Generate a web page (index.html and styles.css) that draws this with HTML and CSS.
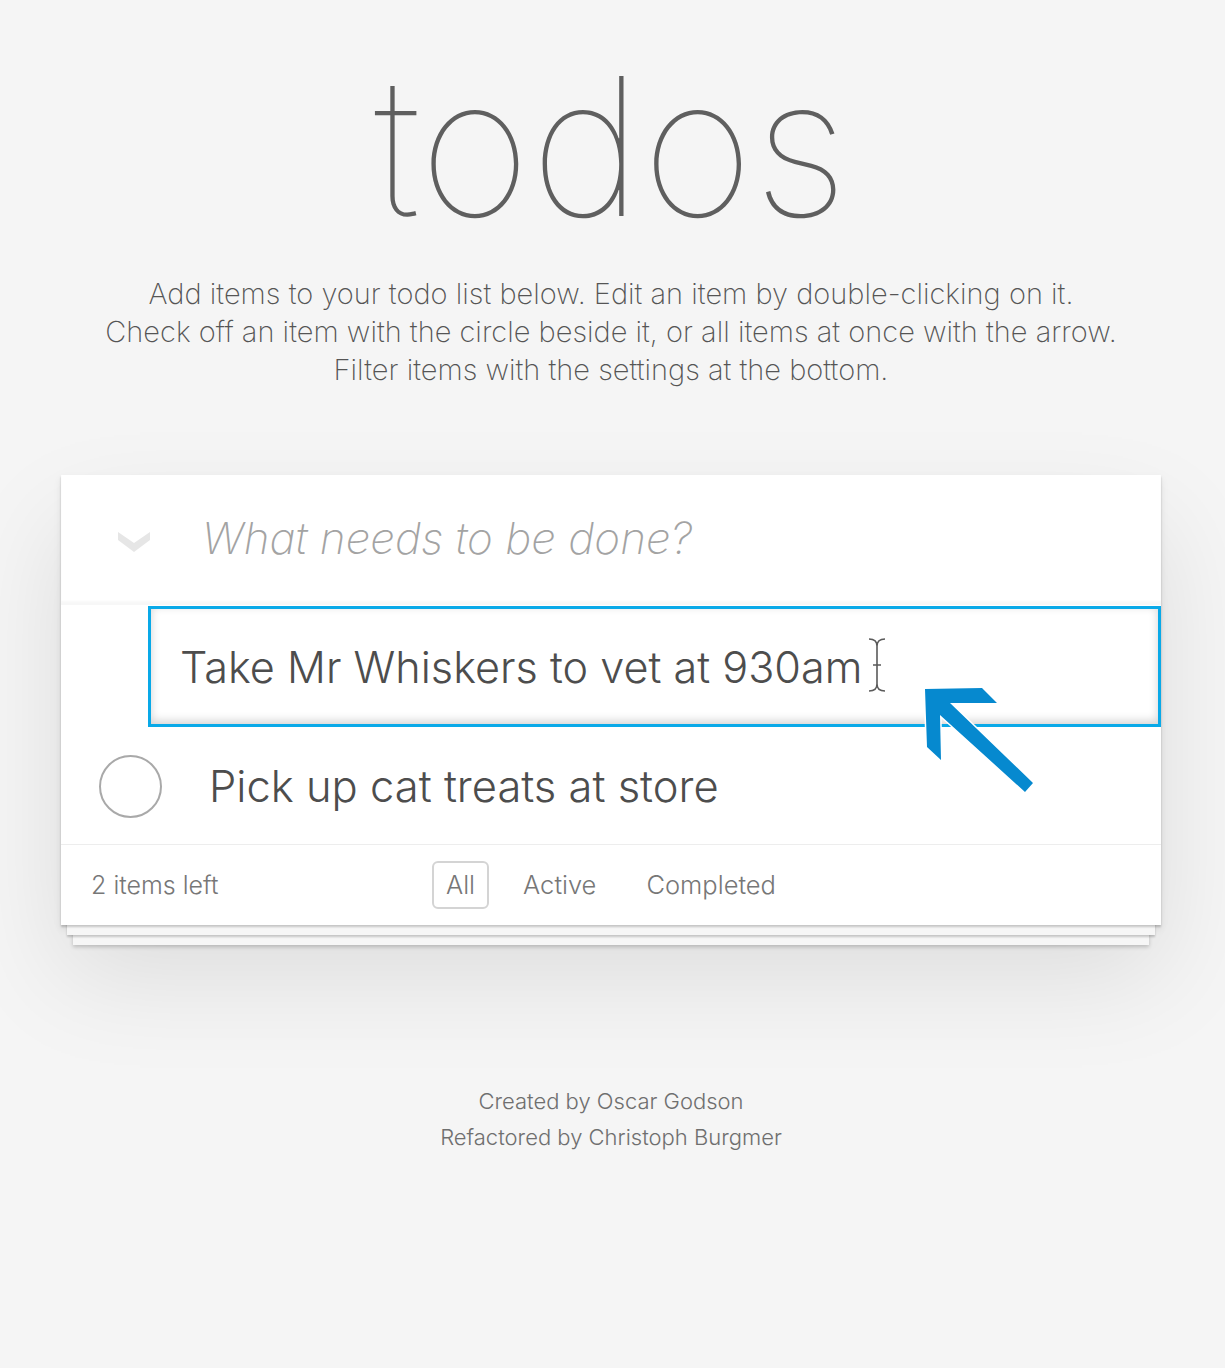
FILE: index.html
```html
<!DOCTYPE html>
<html lang="en">
<head>
<meta charset="utf-8">
<title>todos</title>
<link rel="stylesheet" href="styles.css">
</head>
<body>
<div class="page">
  <h1 class="title">todos</h1>
  <p class="intro">Add items to your todo list below. Edit an item by double-clicking on it.<br>Check off an item with the circle beside it, or all items at once with the arrow.<br>Filter items with the settings at the bottom.</p>

  <section class="card">
    <header class="new-row">
      <svg class="toggle-all" width="34" height="22" viewBox="0 0 34 22" aria-hidden="true">
        <polygon points="1,1 17,12 33,1 33,9 17,21 1,9" fill="#e6e6e6"/>
      </svg>
      <div class="placeholder">What needs to be done?</div>
    </header>

    <ul class="list">
      <li class="item editing">
        <div class="edit">Take Mr Whiskers to vet at 930am<svg class="ibeam" width="18" height="54" viewBox="0 0 18 54" aria-hidden="true">
            <path d="M1 1 Q9 1 9 8 Q9 1 17 1 M9 8 V46 M1 53 Q9 53 9 46 Q9 53 17 53 M5 27 H13" fill="none" stroke="#5a5a5a" stroke-width="1.6"/>
          </svg></div>
      </li>
      <li class="item">
        <span class="check"></span>
        <span class="label">Pick up cat treats at store</span>
      </li>
    </ul>

    <footer class="footer">
      <span class="count">2 items left</span>
      <ul class="filters">
        <li><a class="filter selected">All</a></li>
        <li><a class="filter">Active</a></li>
        <li><a class="filter">Completed</a></li>
      </ul>
    </footer>

    <svg class="arrow" width="124" height="116" viewBox="0 0 124 116" aria-hidden="true">
      <polygon points="4,6 61,5 76,20 29,20 112,100 104,109 19,32 20,77 6,64" fill="#0689cf" stroke="#ffffff" stroke-width="3" stroke-linejoin="miter" paint-order="stroke"/>
    </svg>
  </section>

  <footer class="info">
    <p>Created by Oscar Godson</p>
    <p>Refactored by Christoph Burgmer</p>
  </footer>
</div>
</body>
</html>
```

FILE: styles.css
```css
html, body {
  margin: 0;
  padding: 0;
}

body {
  background: #f5f5f5;
  color: #4d4d4d;
  font-family: Inter, Roboto, "Liberation Sans", sans-serif;
  font-weight: 300;
}

.page {
  padding-right: 3px;
  padding-top: 46px;
  padding-bottom: 40px;
}

.title {
  margin: 0;
  font-size: 192px;
  line-height: 200px;
  font-weight: 100;
  color: #5f5f5f;
  text-align: center;
}

.intro {
  margin: 29px 0 0;
  font-size: 29px;
  line-height: 38px;
  font-weight: 250;
  color: #555;
  text-align: center;
}

.card {
  position: relative;
  width: 1100px;
  margin: 86px auto 0;
  background: #fff;
  box-shadow:
    0 2px 2px rgba(0, 0, 0, 0.2),
    0 16px 0 -6px #f6f6f6,
    0 18px 2px -6px rgba(0, 0, 0, 0.2),
    0 32px 0 -12px #f6f6f6,
    0 34px 4px -12px rgba(0, 0, 0, 0.2),
    0 4px 8px rgba(0, 0, 0, 0.08),
    0 50px 100px rgba(0, 0, 0, 0.1);
}

.new-row {
  height: 130px;
  display: flex;
  align-items: center;
  box-shadow: inset 0 -4px 2px rgba(0, 0, 0, 0.03);
}

.toggle-all {
  margin-left: 56px;
  margin-top: 4px;
  flex: none;
}

.placeholder {
  margin-left: 51px;
  font-size: 44px;
  font-style: italic;
  font-weight: 250;
  color: #a3a3a3;
  margin-top: -4px;
}

.list {
  list-style: none;
  margin: 0;
  padding: 0;
}

.item {
  display: flex;
  align-items: center;
  height: 116px;
  border-bottom: 1px solid #ededed;
  font-size: 43.5px;
  font-weight: 270;
}

.item.editing {
  height: 123px;
  border-bottom: none;
  align-items: flex-start;
}

.edit {
  box-sizing: border-box;
  margin: 1px 0 0 87px;
  width: 1013px;
  height: 121px;
  border: 3px solid #09a9e8;
  box-shadow: inset 0 -3px 10px rgba(0, 0, 0, 0.18);
  padding: 0 0 0 29px;
  display: flex;
  align-items: center;
  color: #4d4d4d;
  font-size: 43.2px;
}

.ibeam {
  margin-left: 6px;
  margin-top: -4px;
  flex: none;
}

.check {
  box-sizing: border-box;
  width: 63px;
  height: 63px;
  margin-left: 38px;
  border: 2px solid #a9a9a9;
  border-radius: 50%;
  flex: none;
}

.label {
  margin-left: 47px;
  color: #4d4d4d;
}

.footer {
  height: 80px;
  display: flex;
  align-items: center;
  padding-left: 30px;
  font-size: 25.5px;
  font-weight: 270;
  color: #777;
}

.count {
  flex: 0 0 341px;
  font-size: 25px;
}

.filters {
  list-style: none;
  margin: 0;
  padding: 0;
  display: flex;
  gap: 20px;
}

.filters li + li + li {
  margin-left: 2px;
}

.filter {
  display: block;
  padding: 4px 12px;
  border: 2px solid transparent;
  border-radius: 6px;
  color: #777;
  line-height: 36px;
}

.filter.selected {
  border-color: #d4d4d4;
}

.arrow {
  position: absolute;
  left: 860px;
  top: 208px;
  pointer-events: none;
}

.info {
  margin-top: 158px;
  text-align: center;
  font-size: 22px;
  line-height: 36px;
  font-weight: 260;
  color: #6f6f6f;
}

.info p {
  margin: 0;
}
```
